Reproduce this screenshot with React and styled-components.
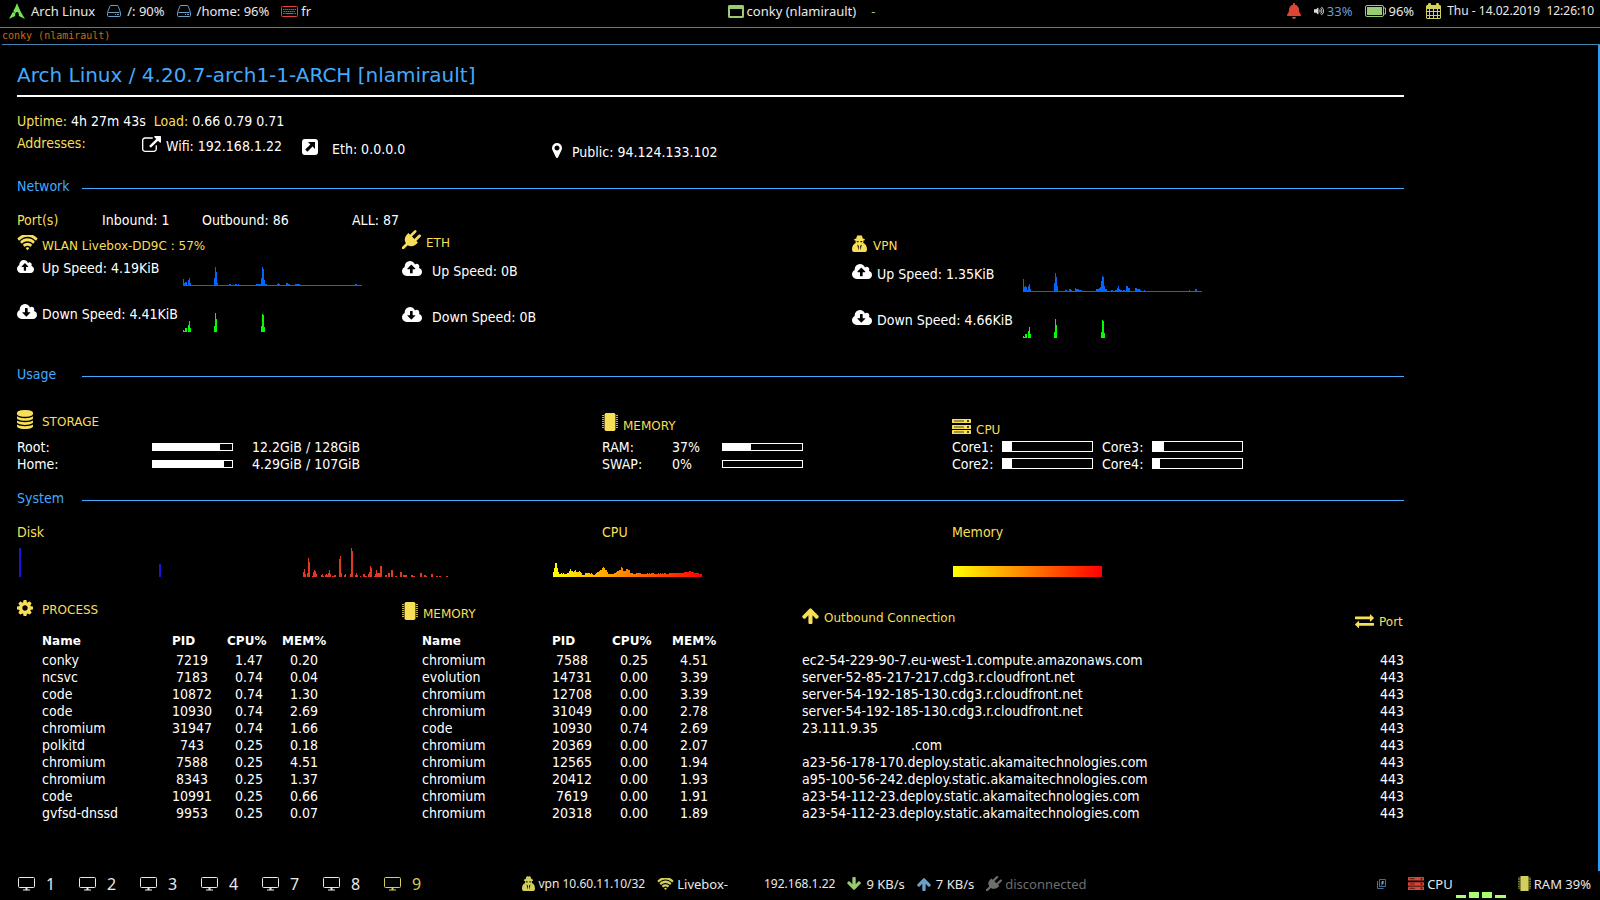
import React from "react";
import styled, { createGlobalStyle, css } from "styled-components";
import { FaBell, FaVolumeUp } from "react-icons/fa";

const color = {
  text: "#ffffff",
  bar: "#e9e9e9",
  yellow: "#f7df57",
  blue: "#42aaff",
  line: "#4682a9",
  olive: "#d3cf5c",
  green: "#98cb74",
  red: "#dd4636",
  steel: "#6a9fc8",
  orange: "#cc6a0a",
  muted: "#6e6e6e",
};

const GlobalStyle = createGlobalStyle`
  * { box-sizing: border-box; }
  body {
    margin: 0;
    background: #000;
    color: ${color.text};
  }
`;

/* ---------- shell ---------- */

const Desktop = styled.div`
  display: flex;
  flex-direction: column;
  min-height: 100vh;
  background: #000;
`;

const barText = css`
  font-family: "Noto Sans", sans-serif;
  font-size: 13px;
  line-height: 18px;
  color: ${color.bar};
  white-space: pre;
`;

const TopBar = styled.header`
  ${barText}
  display: grid;
  grid-template-columns: 1fr auto 1fr;
  align-items: center;
  height: 28px;
  padding: 0 6px 5px 9px;
  border-bottom: 1px solid ${color.line};
`;

const BottomBar = styled.footer`
  ${barText}
  display: grid;
  grid-template-columns: 1fr auto 1fr;
  align-items: center;
  height: 29px;
  padding: 0 9px 4px 18px;
`;

const Group = styled.div`
  display: flex;
  align-items: center;
  justify-content: ${(p) => p.$align || "flex-start"};
  gap: ${(p) => p.$gap || 12}px;
`;

const Item = styled.span`
  display: flex;
  align-items: center;
  gap: ${(p) => p.$gap || 3}px;
  color: ${(p) => p.$color || "inherit"};
`;

const Numeric = styled.span`
  font-size: 12px;
`;

const Workspaces = styled.nav`
  display: flex;
  align-items: center;
`;

const Workspace = styled.button`
  display: flex;
  align-items: center;
  gap: 11px;
  width: 61px;
  padding: 0;
  border: 0;
  background: none;
  font: 16px/22px "Noto Sans", sans-serif;
  color: ${(p) => (p.$active ? color.olive : color.bar)};
`;

const WindowTitle = styled.div`
  height: 17px;
  margin-left: 2px;
  border-bottom: 1px solid ${color.line};
  font: 10px/16px "DejaVu Sans Mono", monospace;
  color: ${color.orange};
`;

const Main = styled.main`
  flex: 1;
  padding: 18px 194px 0 17px;
  border-right: 2px solid #2f9df4;
  font: 14px/17px "DejaVu Sans Condensed", "DejaVu Sans", sans-serif;
  white-space: nowrap;
`;

const Title = styled.h1`
  margin: 0 0 16px;
  padding-bottom: 8px;
  border-bottom: 2px solid #fff;
  font: 20px/24px "DejaVu Sans", sans-serif;
  color: ${color.blue};
`;

/* ---------- shared parts ---------- */

const Label = styled.span`
  color: ${color.yellow};
`;

const Glyph = styled.svg`
  display: block;
  flex: none;
  fill: currentColor;
`;

const Columns = styled.div`
  display: grid;
  grid-template-columns: ${(p) => p.$cols};
  margin-top: ${(p) => p.$top || 0}px;
`;

const Address = styled.div`
  display: flex;
  align-items: flex-end;
  gap: ${(p) => p.$gap || 5}px;
  height: 17px;
  margin-top: ${(p) => p.$step * 3}px;

  svg {
    margin-bottom: 3px;
  }
`;

const SectionTitle = styled.h2`
  display: grid;
  grid-template-columns: 65px 1fr;
  margin: ${(p) => p.$top}px 0 0;
  font-size: 14px;
  font-weight: 400;
  line-height: 17px;
  color: ${color.blue};

  &::after {
    content: "";
    height: 1px;
    margin-top: 10px;
    background: ${color.blue};
  }
`;

const Heading = styled.h3`
  display: flex;
  align-items: flex-end;
  height: 21px;
  margin: ${(p) => (p.$step || 0) * 4}px 0 0;
  font: 12px/15px "DejaVu Sans", sans-serif;
  color: ${color.yellow};
`;

const IconSlot = styled.span`
  display: flex;
  flex: none;
  width: ${(p) => p.$width || 25}px;
  padding-bottom: ${(p) => p.$lift || 3}px;
`;

/* ---------- network ---------- */

const Ports = styled.div`
  display: grid;
  grid-template-columns: 85px 100px 150px auto;
  justify-content: start;
  margin-top: 17px;
`;

const Interface = styled.section`
  padding-top: ${(p) => p.$top}px;
`;

const Speeds = styled.div`
  display: grid;
  gap: 18px;
  margin-top: ${(p) => p.$top}px;
`;

const Speed = styled.div`
  display: grid;
  grid-template-columns: ${(p) => p.$slot}px ${(p) => p.$label}px 179px;
  height: 28px;
`;

const CloudSlot = styled.span`
  display: flex;
  align-items: flex-end;
  height: 15px;
`;

const SpeedText = styled.span`
  padding-top: 2px;
`;

const Chart = styled.svg`
  display: block;
  align-self: end;
  shape-rendering: crispEdges;
`;

/* ---------- usage ---------- */

const UsageRows = styled.div`
  display: grid;
  grid-template-columns: ${(p) => p.$cols};
  align-items: start;
`;

const Track = styled.div`
  width: ${(p) => (p.$tall ? 91 : 81)}px;
  height: ${(p) => (p.$tall ? 11 : 8)}px;
  margin-top: ${(p) => (p.$tall ? 2 : 4)}px;
  border: 1px solid #fff;
`;

const Fill = styled.div`
  height: 100%;
  background: #fff;
`;

/* ---------- system ---------- */

const GraphLine = styled.div`
  display: flex;
  align-items: flex-end;
  height: 29px;
  margin-top: 7px;
`;

const MemoryGraph = styled.div`
  width: 149px;
  height: 11px;
  background: linear-gradient(to right, #ffff00, #ff0000);
`;

/* ---------- tables ---------- */

const HeadingBox = styled.div`
  display: flow-root;
  height: 36px;
`;

const Table = styled.table`
  margin-left: ${(p) => p.$left}px;
  border-collapse: collapse;
  table-layout: fixed;
`;

const Th = styled.th`
  width: ${(p) => p.$width}px;
  height: 19px;
  padding: 0;
  vertical-align: top;
  text-align: left;
  font: bold 12px/17px "DejaVu Sans", sans-serif;
`;

const Td = styled.td`
  height: 17px;
  padding: 0 ${(p) => p.$pad || 0}px 0 0;
  text-align: ${(p) => p.$align || "left"};
`;

const Connections = styled.table`
  align-self: start;
  width: 100%;
  border-collapse: collapse;
`;

const ConnectionTh = styled.th`
  height: 55px;
  padding: 0;
  vertical-align: top;
  text-align: left;
`;

const PortTh = styled(ConnectionTh)`
  width: 49px;
`;

const Redacted = styled.span`
  display: inline-block;
  width: 109px;
`;

/* ---------- icons ---------- */

const CLOUD =
  "m640 288q0 159-112.5 271.5t-271.5 112.5h-1088q-185 0-316.5-131.5t-131.5-316.5q0-130 70-240t188-165q-2-30-2-43 0-212 150-362t362-150q156 0 285.5 87t188.5 231q71-62 166-62 106 0 181 75t75 181q0 76-41 138 130 31 213.5 135.5t83.5 238.5z";

const paths = {
  wifi: [
    "0 232 2048 1292",
    "M1024 1523q-20 0-93-73.5t-73-93.5q0-32 62.5-54t103.5-22 103.5 22 62.5 54q0 20-73 93.5t-93 73.5zm270-271q-2 0-40-25t-101.5-50-128.5-25-128.5 25-101 50-40.5 25q-18 0-93.5-75t-75.5-93q0-13 10-23 78-77 196-121t233-44 233 44 196 121q10 10 10 23 0 18-75.5 93t-93.5 75zm273-272q-11 0-23-8-136-105-252-154.5t-268-49.5q-85 0-170.5 22t-149 53-113.5 62-79 53-31 22q-17 0-92-75t-75-93q0-12 10-22 132-132 320-205t380-73 380 73 320 205q10 10 10 22 0 18-75 93t-92 75zm271-271q-11 0-22-9-179-157-371.5-236.5t-420.5-79.5-420.5 79.5-371.5 236.5q-11 9-22 9-17 0-92.5-75t-75.5-93q0-13 10-23 187-186 445-288t527-102 527 102 445 288q10 10 10 23 0 18-75.5 93t-92.5 75z",
  ],
  upload: [
    "-64 128 1920 1408",
    "M1216 864q0-14-9-23l-352-352q-9-9-23-9t-23 9l-351 351q-10 12-10 24 0 14 9 23t23 9h224v352q0 13 9.5 22.5t22.5 9.5h192q13 0 22.5-9.5t9.5-22.5v-352h224q13 0 22.5-9.5t9.5-22.5z" + CLOUD,
  ],
  download: [
    "-64 128 1920 1408",
    "M1216 928q0-14-9-23t-23-9h-224v-352q0-13-9.5-22.5t-22.5-9.5h-192q-13 0-22.5 9.5t-9.5 22.5v352h-224q-13 0-22.5 9.5t-9.5 22.5q0 14 9 23l352 352q9 9 23 9t23-9l351-351q10-12 10-24z" +
      CLOUD.replace("m640 288", "m640 224"),
  ],
  gear: [
    "128 128 1536 1536",
    "M1152 896q0-106-75-181t-181-75-181 75-75 181 75 181 181 75 181-75 75-181zm512-109v222q0 12-8 23t-20 13l-185 28q-19 54-39 91 35 50 107 138 10 12 10 25t-9 23q-27 37-99 108t-94 71q-12 0-26-9l-138-108q-44 23-91 38-16 136-29 186-7 28-36 28h-222q-14 0-24.5-8.5t-11.5-21.5l-28-184q-49-16-90-37l-141 107q-10 9-25 9-14 0-25-11-126-114-165-168-7-10-7-23 0-12 8-23 15-21 51-66.5t54-70.5q-27-50-41-99l-183-27q-13-2-21-12.5t-8-23.5v-222q0-12 8-23t19-13l186-28q14-46 39-92-40-57-107-138-10-12-10-24 0-10 9-23 26-36 98.5-107.5t94.5-71.5q13 0 26 10l138 107q44-23 91-38 16-136 29-186 7-28 36-28h222q14 0 24.5 8.5t11.5 21.5l28 184q49 16 90 37l142-107q9-9 24-9 13 0 25 10 129 119 165 170 7 8 7 22 0 12-8 23-15 21-51 66.5t-54 70.5q26 50 41 98l183 28q13 2 21 12.5t8 23.5z",
  ],
  database: [
    "128 0 1536 1792",
    "M896 768q237 0 443-43t325-127v170q0 69-103 128t-280 93.5-385 34.5-385-34.5-280-93.5-103-128v-170q119 84 325 127t443 43zm0 768q237 0 443-43t325-127v170q0 69-103 128t-280 93.5-385 34.5-385-34.5-280-93.5-103-128v-170q119 84 325 127t443 43zm0-384q237 0 443-43t325-127v170q0 69-103 128t-280 93.5-385 34.5-385-34.5-280-93.5-103-128v-170q119 84 325 127t443 43zm0-1152q208 0 385 34.5t280 93.5 103 128v128q0 69-103 128t-280 93.5-385 34.5-385-34.5-280-93.5-103-128v-128q0-69 103-128t280-93.5 385-34.5z",
  ],
  plug: [
    "0 0 1792 1792",
    "M1755 453q37 38 37 90.5t-37 90.5l-401 400 150 150-160 160q-163 163-389.5 186.5t-411.5-100.5l-362 362h-181v-181l362-362q-124-185-100.5-411.5t186.5-389.5l160-160 150 150 400-401q38-37 91-37t90 37 37 90.5-37 90.5l-400 401 234 234 401-400q38-37 91-37t90 37z",
  ],
  up: [
    "100 64 1600 1600",
    "M1675 971q0 51-37 90l-75 75q-38 38-91 38-54 0-90-38l-294-293v704q0 52-37.5 84.5t-90.5 32.5h-128q-53 0-90.5-32.5t-37.5-84.5v-704l-294 293q-36 38-90 38t-90-38l-75-75q-38-38-38-90 0-53 38-91l651-651q35-37 90-37 54 0 91 37l651 651q37 39 37 91z",
  ],
  exchange: [
    "0 160 1792 1472",
    "M1792 1184v192q0 13-9.5 22.5t-22.5 9.5h-1376v192q0 13-9.5 22.5t-22.5 9.5q-12 0-24-10l-319-320q-9-9-9-22 0-14 9-23l320-320q9-9 23-9 13 0 22.5 9.5t9.5 22.5v192h1376q13 0 22.5 9.5t9.5 22.5zm0-544q0 14-9 23l-320 320q-9 9-23 9-13 0-22.5-9.5t-9.5-22.5v-192h-1376q-13 0-22.5-9.5t-9.5-22.5v-192q0-13 9.5-22.5t22.5-9.5h1376v-192q0-14 9-23t23-9q12 0 24 10l319 319q9 9 9 23z",
  ],
  link: [
    "0 0 1792 1536",
    "M1408 928v320q0 119-84.5 203.5t-203.5 84.5h-832q-119 0-203.5-84.5t-84.5-203.5v-832q0-119 84.5-203.5t203.5-84.5h704q14 0 23 9t9 23v64q0 14-9 23t-23 9h-704q-66 0-113 47t-47 113v832q0 66 47 113t113 47h832q66 0 113-47t47-113v-320q0-14 9-23t23-9h64q14 0 23 9t9 23zm384-864v512q0 26-19 45t-45 19-45-19l-176-176-652 652q-10 10-23 10t-23-10l-114-114q-10-10-10-23t10-23l652-652-176-176q-19-19-19-45t19-45 45-19h512q26 0 45 19t19 45z",
  ],
  marker: [
    "384 128 1024 1536",
    "M1152 640q0-106-75-181t-181-75-181 75-75 181 75 181 181 75 181-75 75-181zm256 0q0 109-33 179l-364 774q-16 33-47.5 52t-67.5 19-67.5-19-46.5-52l-365-774q-33-70-33-179 0-212 150-362t362-150 362 150 150 362z",
  ],
};

const Icon = ({ name, w, h, flip }) => (
  <Glyph width={w} height={h} viewBox={paths[name][0]} preserveAspectRatio="none" aria-hidden="true">
    <path d={paths[name][1]} transform={flip ? "rotate(180 900 864)" : undefined} />
  </Glyph>
);

const SpyIcon = ({ w = 15, h = 17 }) => (
  <Glyph width={w} height={h} viewBox="0 0 15 17" preserveAspectRatio="none" aria-hidden="true">
    <path d="M4.200 3.500L5 1Q5.500 0 6.500 .400Q7.500 .800 8.500 .400Q9.500 0 10 1L10.800 3.500Q13 4 13 4.700Q13 5.300 11.500 5.600L11.300 8Q15 9.500 15 14.500Q15 17 13 17H2Q0 17 0 14.500Q0 9.500 3.700 8L3.500 5.600Q2 5.300 2 4.700Q2 4 4.200 3.500z" />
    <path fill="#000" opacity="0.85" d="M4.500 6h2.300l-.400 1.300H5zM8.200 6h2.300L10 7.300H8.600zM5.200 9.500l1.400 .900L7 11.500 6.500 15.500zM9.800 9.500l-1.400 .900L8 11.500 8.500 15.500z" />
  </Glyph>
);

const ChipIcon = ({ w = 16, h = 18 }) => (
  <Glyph width={w} height={h} viewBox="0 0 16 18" preserveAspectRatio="none" aria-hidden="true">
    <rect x="3" y="0" width="10" height="18" rx="1" />
    {[2, 4, 6, 8, 10, 12, 14].map((y) => (
      <g key={y} opacity="0.8">
        <rect x="0" y={y} width="2" height="1" />
        <rect x="14" y={y} width="2" height="1" />
      </g>
    ))}
    <path opacity="0.45" d="M2 1h1v16H2zM13 1h1v16h-1z" />
  </Glyph>
);

const ServerIcon = ({ w = 19, h = 15, solid }) => (
  <Glyph width={w} height={h} viewBox="0 0 19 15" preserveAspectRatio="none" aria-hidden="true">
    {[0, 6, 11].map((y) => (
      <g key={y}>
        <rect x="0" y={y} width="19" height="4" rx="0.5" />
        <rect x="2" y={y + 1.5} width={solid ? 6 : 10} height="1" fill="#000" opacity="0.7" />
        <rect x="15" y={y + 1} width="2" height="2" fill="#000" opacity="0.7" />
      </g>
    ))}
  </Glyph>
);

const ArchIcon = () => (
  <Glyph width="16" height="16" viewBox="0 0 16 16" aria-hidden="true">
    <path
      fill="#72e654"
      d="M8 0 C7 3 5.800 5.600 4.200 8.200 L6 9.400 L3.600 9.300 L0 16 L6.200 12.900 C6 10.500 6.600 9 8 9 C9.400 9 10 10.500 9.800 12.900 L16 16 C13 11 10 6 8 0 Z"
    />
  </Glyph>
);

const DriveIcon = () => (
  <Glyph width="14" height="12" viewBox="0 0 14 12" aria-hidden="true">
    <path
      fill="none"
      stroke={color.steel}
      d="M0.500 7.500 L2.800 1.300 Q3 0.500 4 0.500 H10 Q11 0.500 11.200 1.300 L13.500 7.500 V10.500 Q13.500 11.500 12.500 11.500 H1.500 Q0.500 11.500 0.500 10.500 V8 Q0.500 7.500 1.500 7.500 H12.500"
    />
    <path fill={color.steel} d="M8 9h1v1H8zM10 9h2v1h-2z" />
  </Glyph>
);

const KeyboardIcon = () => (
  <Glyph width="17" height="11" viewBox="0 0 17 11" aria-hidden="true">
    <rect x="0.5" y="0.5" width="16" height="10" rx="1" fill="none" stroke={color.red} />
    <path stroke={color.red} strokeDasharray="1.5 0.5" d="M2 3.500h13M2.500 5.500h12" />
    <path stroke={color.red} d="M2 7.500h1.500M4.500 7.500h8M13.500 7.500h1.500" />
  </Glyph>
);

const WindowIcon = () => (
  <Glyph width="16" height="13" viewBox="0 0 16 13" aria-hidden="true">
    <path fill={color.green} fillRule="evenodd" d="M1 0h14l1 1v11l-1 1H1l-1-1V1zM2 4v7h12V4z" />
  </Glyph>
);

const BatteryIcon = () => (
  <Glyph width="21" height="12" viewBox="0 0 21 12" aria-hidden="true">
    <rect x="0.5" y="0.5" width="18" height="11" rx="1.5" fill="none" stroke={color.green} />
    <rect x="2" y="2" width="15" height="8" fill={color.green} />
    <path d="M19 3h1.500v6H19" fill="none" stroke={color.green} />
  </Glyph>
);

const CalendarIcon = () => (
  <Glyph width="15" height="16" viewBox="0 0 15 16" aria-hidden="true">
    <path
      fill={color.olive}
      fillRule="evenodd"
      d="M1 2h1V1q0-1 1.500-1T5 1v1h5V1q0-1 1.500-1T13 1v1h1l1 1v12l-1 1H1l-1-1V3zM1 6v2h2V6zM4 6v2h3V6zM8 6v2h3V6zM12 6v2h2V6zM1 9v3h2V9zM4 9v3h3V9zM8 9v3h3V9zM12 9v3h2V9zM1 13v2h2v-2zM4 13v2h3v-2zM8 13v2h3v-2zM12 13v2h2v-2z"
    />
  </Glyph>
);

const MonitorIcon = () => (
  <Glyph width="17" height="14" viewBox="0 0 17 14" aria-hidden="true">
    <rect x="0.5" y="0.5" width="16" height="10" rx="1" fill="none" stroke="currentColor" />
    <path d="M7.500 11h2v1.500h2.500v1H5v-1h2.500z" />
  </Glyph>
);

const EthIcon = () => (
  <Glyph width="16" height="16" viewBox="0 0 16 16" aria-hidden="true">
    <rect width="16" height="16" rx="3" />
    <path fill="#000" d="M6 3h7v7l-2.400-2.400-5.200 5.200-2.200-2.200 5.200-5.200z" />
  </Glyph>
);

const TrayIcon = () => (
  <Glyph width="9" height="10" viewBox="0 0 9 10" aria-hidden="true">
    <path fill="none" stroke="#45708f" d="M2.500 0.500h6v7h-6zM0.500 2v7.500h6" />
    <path fill="#6a9fc8" d="M5 2h2L6 3.500h1.500L4 7l1-2.500H4z" />
  </Glyph>
);

const LoadIcon = () => (
  <Glyph width="50" height="6" viewBox="0 0 50 6" aria-hidden="true">
    <path fill="#a5ff70" d="M0 3h10v3H0zM13 0h10v6H13zM26 0h10v6H26zM39 3h11v3H39z" />
  </Glyph>
);

/* the load bars hang under the text line, near the screen edge */
const LoadSlot = styled.span`
  align-self: flex-end;
  height: 6px;
  margin-bottom: -5px;
`;

/* ---------- charts ---------- */

/* every sample is [x, height, width] */
const Spikes = ({ data, fill, width = 179, height = 20, base, label }) => (
  <Chart width={width} height={height} fill={fill} role="img" aria-label={label}>
    {base && <rect x="0" y={height - 1} width={width} height="1" />}
    {data.map(([x, h, w = 1]) => (
      <rect key={x} x={x} y={height - h} width={w} height={h} />
    ))}
  </Chart>
);

const wlanUp = [[0, 7], [1, 3], [2, 4, 2], [5, 6], [6, 8], [7, 3], [31, 8], [32, 19], [33, 14], [34, 3], [46, 2, 2], [52, 2, 2], [55, 2], [73, 2, 5], [78, 8], [79, 19], [80, 17], [81, 6], [82, 2, 2], [94, 2], [95, 3], [96, 2], [103, 3, 2], [105, 2, 2], [112, 2, 5], [172, 2, 2]];
const wlanDown = [[0, 2], [1, 1], [2, 4, 2], [5, 7], [6, 11], [7, 4], [31, 6], [32, 19], [33, 13], [78, 6], [79, 18], [80, 17], [81, 5]];
const vpnUp = [[0, 13], [1, 5], [2, 6], [3, 5], [4, 2], [5, 6], [6, 8], [7, 3], [31, 9], [32, 19], [33, 15], [34, 6], [42, 2, 2], [46, 3, 2], [48, 2], [52, 4], [53, 3, 2], [55, 3], [56, 2, 3], [73, 3, 3], [76, 4], [77, 5], [78, 11], [79, 16], [80, 15], [81, 6], [82, 3, 2], [88, 2, 2], [92, 2, 2], [94, 4], [95, 6], [96, 3], [97, 2, 2], [100, 2, 2], [103, 6, 2], [105, 4, 2], [112, 4, 2], [114, 3, 3], [117, 2], [121, 2], [166, 2], [172, 3, 2]];
const diskRead = [[0, 29, 2], [140, 13, 2]];
const diskWrite = [[0, 5], [1, 8], [2, 3], [4, 4], [5, 19], [6, 15], [9, 1], [10, 5], [11, 7], [12, 6], [13, 3], [18, 2], [19, 3], [20, 1], [22, 2], [23, 3], [24, 2], [25, 4], [26, 7], [27, 3], [29, 1, 2], [31, 2, 2], [36, 18], [37, 21], [38, 4], [41, 2], [42, 3], [47, 3], [48, 29], [49, 26], [52, 2], [53, 4], [54, 2], [57, 1], [60, 3, 2], [62, 1, 2], [65, 3], [66, 5], [67, 11], [68, 9], [71, 1], [72, 3], [73, 7], [74, 4, 3], [77, 11, 2], [82, 2, 2], [85, 4, 2], [88, 7, 2], [92, 1, 2], [97, 5, 2], [100, 2, 4], [108, 2, 2], [110, 1, 2], [117, 4, 2], [121, 2, 2], [123, 1], [128, 3, 2], [133, 1, 2], [136, 1, 2], [143, 1, 2]];
const cpuLoad = [
  5, 9, 14, 14, 9, 5, 3, 3, 4, 3, 4, 3, 3, 3, 4, 4, 6, 8, 6, 6, 5, 6, 7, 5, 5, 5, 6, 5, 4, 2, 2, 2, 4, 4, 4, 4, 4, 3, 4, 3, 2, 2, 3, 4, 5, 5, 6, 7, 7, 9, 10, 9, 7, 7, 5, 3, 3, 3, 3, 3, 3, 4, 4, 5, 6, 6, 7, 7, 10, 9, 6, 6, 6, 8, 8, 7, 7, 4, 4, 4, 3, 3, 3, 4, 4, 4, 4, 4, 3, 3, 3, 3, 3, 3, 4, 3, 4, 3, 4, 4, 4, 3, 3, 3, 3, 4, 3, 4, 3, 4, 3, 4, 4, 3, 3, 3, 4, 4, 4, 4, 4, 4, 4, 4, 4, 4, 4, 4, 4, 4, 4, 5, 5, 5, 5, 5, 6, 6, 5, 5, 5, 4, 4, 4, 4, 4, 3, 3, 3,
];

const CpuChart = () => (
  <Chart width="149" height="15" fill="url(#heat)" role="img" aria-label="CPU history">
    <defs>
      <linearGradient id="heat" gradientUnits="userSpaceOnUse" x1="0" x2="149" y1="0" y2="0">
        <stop offset="0" stopColor="#ffff00" />
        <stop offset="1" stopColor="#ff0000" />
      </linearGradient>
    </defs>
    <path d={"M0 15" + cpuLoad.map((h, x) => `V${15 - h}H${x + 1}`).join("") + "V15z"} />
  </Chart>
);

const GraphPad = styled.div`
  padding-left: ${(p) => p.$left}px;
`;

/* ---------- composed parts ---------- */

const Bar = ({ value, tall, label }) => (
  <Track $tall={tall} role="meter" aria-label={label} aria-valuenow={value} aria-valuemin={0} aria-valuemax={100}>
    <Fill style={{ width: `${value}%` }} />
  </Track>
);

const SpeedRow = ({ icon, iconSize = [20, 15], text, slot = 25, label, children }) => (
  <Speed $slot={slot} $label={label}>
    <CloudSlot><Icon name={icon} w={iconSize[0]} h={iconSize[1]} /></CloudSlot>
    <SpeedText>{text}</SpeedText>
    {children}
  </Speed>
);

const processes = [
  ["conky", "7219", "1.47", "0.20"],
  ["ncsvc", "7183", "0.74", "0.04"],
  ["code", "10872", "0.74", "1.30"],
  ["code", "10930", "0.74", "2.69"],
  ["chromium", "31947", "0.74", "1.66"],
  ["polkitd", "743", "0.25", "0.18"],
  ["chromium", "7588", "0.25", "4.51"],
  ["chromium", "8343", "0.25", "1.37"],
  ["code", "10991", "0.25", "0.66"],
  ["gvfsd-dnssd", "9953", "0.25", "0.07"],
];

const memory = [
  ["chromium", "7588", "0.25", "4.51"],
  ["evolution", "14731", "0.00", "3.39"],
  ["chromium", "12708", "0.00", "3.39"],
  ["chromium", "31049", "0.00", "2.78"],
  ["code", "10930", "0.74", "2.69"],
  ["chromium", "20369", "0.00", "2.07"],
  ["chromium", "12565", "0.00", "1.94"],
  ["chromium", "20412", "0.00", "1.93"],
  ["chromium", "7619", "0.00", "1.91"],
  ["chromium", "20318", "0.00", "1.89"],
];

const connections = [
  "ec2-54-229-90-7.eu-west-1.compute.amazonaws.com",
  "server-52-85-217-217.cdg3.r.cloudfront.net",
  "server-54-192-185-130.cdg3.r.cloudfront.net",
  "server-54-192-185-130.cdg3.r.cloudfront.net",
  "23.111.9.35",
  ".com",
  "a23-56-178-170.deploy.static.akamaitechnologies.com",
  "a95-100-56-242.deploy.static.akamaitechnologies.com",
  "a23-54-112-23.deploy.static.akamaitechnologies.com",
  "a23-54-112-23.deploy.static.akamaitechnologies.com",
];

const ProcessTable = ({ rows, left, pitch }) => (
  <Table $left={left}>
    <thead>
      <tr>
        <Th $width={130}>Name</Th>
        <Th $width={pitch}>PID</Th>
        <Th $width={pitch}>CPU%</Th>
        <Th $width={44}>MEM%</Th>
      </tr>
    </thead>
    <tbody>
      {rows.map(([name, pid, cpu, mem]) => (
        <tr key={pid}>
          <Td>{name}</Td>
          <Td $align="center" $pad={pitch - 40}>{pid}</Td>
          <Td $align="center" $pad={pitch - 44}>{cpu}</Td>
          <Td $align="center">{mem}</Td>
        </tr>
      ))}
    </tbody>
  </Table>
);

export default function App() {
  return (
    <Desktop>
      <GlobalStyle />
      <TopBar>
        <Group>
          <Item $gap={6}><ArchIcon />Arch Linux</Item>
          <Item $gap={6}><DriveIcon />/: 90%</Item>
          <Item $gap={6}><DriveIcon />/home: 96%</Item>
          <Item><KeyboardIcon />fr</Item>
        </Group>
        <Group $gap={15}>
          <Item><WindowIcon />conky (nlamirault)</Item>
          <Item $color={color.green}>-</Item>
        </Group>
        <Group $align="flex-end">
          <Item $color={color.red}><FaBell size={16} /></Item>
          <Item $color={color.steel}><FaVolumeUp size={10} color="#ddd" />33%</Item>
          <Item><BatteryIcon />96%</Item>
          <Item $gap={6}><CalendarIcon /><Numeric>{"Thu - 14.02.2019  12:26:10"}</Numeric></Item>
        </Group>
      </TopBar>

      <WindowTitle>conky (nlamirault)</WindowTitle>

      <Main>
        <Title>Arch Linux / 4.20.7-arch1-1-ARCH [nlamirault]</Title>

        <div>
          <Label>Uptime:</Label> 4h 27m 43s&nbsp; <Label>Load:</Label> 0.66 0.79 0.71
        </div>
        <Columns $cols="125px 160px 250px 1fr" $top={5}>
          <Address $step={0}><Label>Addresses:</Label></Address>
          <Address $step={1}><Icon name="link" w={19} h={16} />Wifi: 192.168.1.22</Address>
          <Address $step={2} $gap={14}><EthIcon />Eth: 0.0.0.0</Address>
          <Address $step={3} $gap={10}><Icon name="marker" w={10} h={15} />Public: 94.124.133.102</Address>
        </Columns>

        <SectionTitle $top={17}>Network</SectionTitle>
        <Ports>
          <Label>Port(s)</Label>
          <span>Inbound: 1</span>
          <span>Outbound: 86</span>
          <span>ALL: 87</span>
        </Ports>
        <Columns $cols="385fr 450fr 552fr">
          <Interface $top={4}>
            <Heading>
              <IconSlot $lift={4}><Icon name="wifi" w={21} h={15} /></IconSlot>
              WLAN Livebox-DD9C : 57%
            </Heading>
            <Speeds $top={4}>
              <SpeedRow icon="upload" iconSize={[17, 13]} text="Up Speed: 4.19KiB" label={141}>
                <Spikes data={wlanUp} fill="#0066ff" base label="WLAN upload" />
              </SpeedRow>
              <SpeedRow icon="download" text="Down Speed: 4.41KiB" label={141}>
                <Spikes data={wlanDown} fill="#00ff00" label="WLAN download" />
              </SpeedRow>
            </Speeds>
          </Interface>
          <Interface $top={1}>
            <Heading>
              <IconSlot $width={24} $lift={2}><Icon name="plug" w={19} h={19} /></IconSlot>
              ETH
            </Heading>
            <Speeds $top={10}>
              <SpeedRow icon="upload" text="Up Speed: 0B" slot={30} label={136} />
              <SpeedRow icon="download" text="Down Speed: 0B" slot={30} label={136} />
            </Speeds>
          </Interface>
          <Interface $top={4}>
            <Heading>
              <IconSlot $width={21} $lift={2}><SpyIcon /></IconSlot>
              VPN
            </Heading>
            <Speeds $top={10}>
              <SpeedRow icon="upload" text="Up Speed: 1.35KiB" label={146}>
                <Spikes data={vpnUp} fill="#0066ff" base label="VPN upload" />
              </SpeedRow>
              <SpeedRow icon="download" text="Down Speed: 4.66KiB" label={146}>
                <Spikes data={wlanDown} fill="#00ff00" label="VPN download" />
              </SpeedRow>
            </Speeds>
          </Interface>
        </Columns>

        <SectionTitle $top={28}>Usage</SectionTitle>
        <Columns $cols="585fr 350fr 452fr" $top={26}>
          <Heading $step={0}>
            <IconSlot $lift={1}><Icon name="database" w={16} h={19} /></IconSlot>
            STORAGE
          </Heading>
          <Heading $step={1}>
            <IconSlot $width={21}><ChipIcon /></IconSlot>
            MEMORY
          </Heading>
          <Heading $step={2}>
            <IconSlot $width={24} $lift={4}><ServerIcon /></IconSlot>
            CPU
          </Heading>
        </Columns>
        <Columns $cols="585fr 350fr 452fr" $top={1}>
          <UsageRows $cols="135px 100px 1fr">
            <span>Root:</span><Bar value={85} label="Root" /><span>12.2GiB / 128GiB</span>
            <span>Home:</span><Bar value={90} label="Home" /><span>4.29GiB / 107GiB</span>
          </UsageRows>
          <UsageRows $cols="70px 50px 1fr">
            <span>RAM:</span><span>37%</span><Bar value={36} label="RAM" />
            <span>SWAP:</span><span>0%</span><Bar value={0} label="SWAP" />
          </UsageRows>
          <UsageRows $cols="50px 100px 50px 1fr">
            <span>Core1:</span><Bar tall value={10} label="Core1" />
            <span>Core3:</span><Bar tall value={12} label="Core3" />
            <span>Core2:</span><Bar tall value={10} label="Core2" />
            <span>Core4:</span><Bar tall value={8} label="Core4" />
          </UsageRows>
        </Columns>

        <SectionTitle $top={17}>System</SectionTitle>
        <Columns $cols="585fr 350fr 452fr" $top={17}>
          <Label>Disk</Label>
          <Label>CPU</Label>
          <Label>Memory</Label>
        </Columns>
        <Columns $cols="286fr 250fr 400fr 451fr">
          <GraphLine>
            <GraphPad $left={2}>
              <Spikes data={diskRead} fill="#1c12dc" width={150} height={29} label="Disk reads" />
            </GraphPad>
          </GraphLine>
          <GraphLine>
            <Spikes data={diskWrite} fill="#e03a22" width={150} height={29} label="Disk writes" />
          </GraphLine>
          <GraphLine><CpuChart /></GraphLine>
          <GraphLine><MemoryGraph role="img" aria-label="Memory history" /></GraphLine>
        </Columns>

        <Columns $cols="385fr 400fr 602fr" $top={20}>
          <section>
            <HeadingBox>
              <Heading>
                <IconSlot $lift={2}><Icon name="gear" w={16} h={16} /></IconSlot>
                PROCESS
              </Heading>
            </HeadingBox>
            <ProcessTable rows={processes} left={25} pitch={55} />
          </section>
          <section>
            <HeadingBox>
              <Heading $step={1}>
                <IconSlot $width={21} $lift={2}><ChipIcon /></IconSlot>
                MEMORY
              </Heading>
            </HeadingBox>
            <ProcessTable rows={memory} left={20} pitch={60} />
          </section>
          <Connections>
            <thead>
              <tr>
                <ConnectionTh>
                  <Heading as="div" $step={2}>
                    <IconSlot $width={22} $lift={2}><Icon name="up" w={17} h={17} /></IconSlot>
                    Outbound Connection
                  </Heading>
                </ConnectionTh>
                <PortTh>
                  <Heading as="div" $step={3}>
                    <IconSlot $width={24} $lift={2}><Icon name="exchange" w={19} h={15} /></IconSlot>
                    Port
                  </Heading>
                </PortTh>
              </tr>
            </thead>
            <tbody>
              {connections.map((host, i) => (
                <tr key={i}>
                  <Td>{host === ".com" && <Redacted />}{host}</Td>
                  <Td $align="right">443</Td>
                </tr>
              ))}
            </tbody>
          </Connections>
        </Columns>
      </Main>

      <BottomBar>
        <Workspaces aria-label="Workspaces">
          {[1, 2, 3, 4, 7, 8, 9].map((n) => (
            <Workspace key={n} type="button" $active={n === 9}><MonitorIcon />{n}</Workspace>
          ))}
        </Workspaces>
        <Group $gap={12}>
          <Item>
            <Item $color={color.olive}><SpyIcon w={13} h={15} /></Item>
            <Numeric>vpn 10.60.11.10/32</Numeric>
          </Item>
          <Group $gap={36}>
            <Item><Item $color={color.olive}><Icon name="wifi" w={17} h={12} /></Item>Livebox-</Item>
            <Numeric>192.168.1.22</Numeric>
          </Group>
          <Item $gap={5}><Item $color={color.green}><Icon name="up" w={14} h={14} flip /></Item>9 KB/s</Item>
          <Item $gap={5}><Item $color={color.steel}><Icon name="up" w={14} h={14} /></Item>7 KB/s</Item>
          <Item $color={color.muted}><Icon name="plug" w={16} h={15} />disconnected</Item>
        </Group>
        <Group $align="flex-end" $gap={12}>
          <Group $gap={22}>
            <TrayIcon />
            <Item><Item $color={color.red}><ServerIcon w={16} h={13} solid /></Item>CPU<LoadSlot><LoadIcon /></LoadSlot></Item>
          </Group>
          <Item><Item $color={color.olive}><ChipIcon w={13} h={15} /></Item>RAM 39%</Item>
        </Group>
      </BottomBar>
    </Desktop>
  );
}
